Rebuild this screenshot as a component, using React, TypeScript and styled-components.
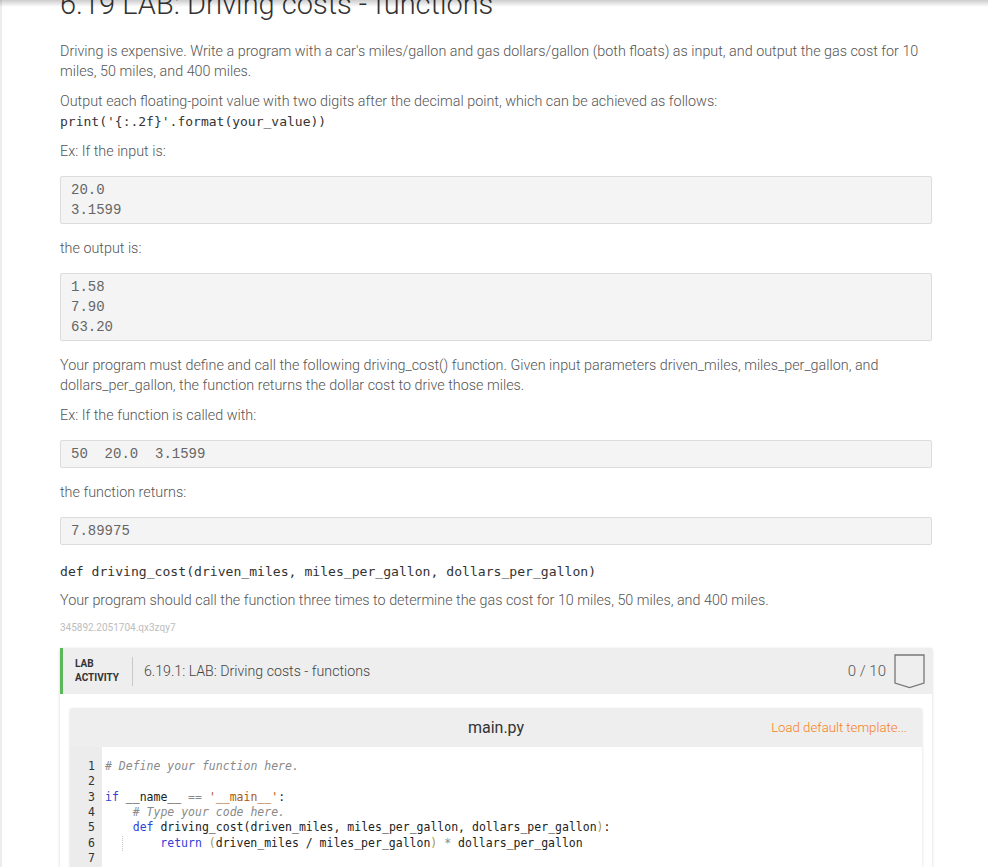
import React from 'react';
import styled, { createGlobalStyle } from 'styled-components';

const Global = createGlobalStyle`
  html, body { margin: 0; padding: 0; background: #fff; }
  body { font-family: Roboto, "Liberation Sans", sans-serif; }
`;

const Viewport = styled.div`
  position: relative;
  height: 867px;
  overflow: hidden;
  background: #fff;
`;

const TopShade = styled.div`
  position: absolute;
  top: 0;
  left: 0;
  right: 0;
  height: 7px;
  background: linear-gradient(to bottom, rgba(0, 0, 0, 0.2), rgba(0, 0, 0, 0));
  pointer-events: none;
  z-index: 5;
`;

const Page = styled.main`
  border-left: 2px solid #ededed;
  padding: 0 56px 0 58px;
`;

const Title = styled.h1`
  margin: -16px 0 18px;
  font: 300 29px/40px Roboto, "Liberation Sans", sans-serif;
  color: #333;
  white-space: nowrap;
`;

const P = styled.p`
  margin: 0 0 10px;
  font: 300 14.35px/20px Roboto, "Liberation Sans", sans-serif;
  color: #555;
`;

const InlineCode = styled.code`
  display: block;
  font: 13px/20px "DejaVu Sans Mono", monospace;
  color: #333;
`;

const Sample = styled.pre`
  margin: 14px 0 15px;
  padding: 3px 10px;
  background: #f4f4f4;
  border: 1px solid #dcdcdc;
  border-radius: 2px;
  font: 14px/20px "Liberation Mono", monospace;
  color: #666;
  white-space: pre;
`;

const Signature = styled.pre`
  margin: 17px 0 9px;
  font: 13.1px/20px "DejaVu Sans Mono", monospace;
  color: #333;
`;

const SmallId = styled.div`
  margin: 8px 0 13px;
  font: 10px/14px Roboto, "Liberation Sans", sans-serif;
  color: #bdbdbd;
`;

const Lab = styled.section`
  background: #fff;
  box-shadow: 0 1px 3px rgba(0, 0, 0, 0.18);
`;

const LabHeader = styled.header`
  display: flex;
  align-items: center;
  height: 46px;
  background: #eee;
  border-left: 3px solid #5cb65c;
  padding: 0 7px 0 12px;
`;

const LabTag = styled.div`
  font: 700 10px/14px Roboto, "Liberation Sans", sans-serif;
  color: #333;
  text-transform: uppercase;
`;

const Divider = styled.div`
  width: 1px;
  height: 29px;
  background: #c8c8c8;
  margin: 0 11px 0 13px;
`;

const LabTitle = styled.div`
  flex: 1;
  font: 300 14.2px/20px Roboto, "Liberation Sans", sans-serif;
  color: #444;
`;

const Score = styled.div`
  font: 300 15px/20px Roboto, "Liberation Sans", sans-serif;
  color: #555;
  margin-right: 8px;
`;

const LabBody = styled.div`
  padding: 14px 10px 0 10px;
`;

const Editor = styled.div`
  background: #fff;
  border-radius: 2px;
  box-shadow: 0 1px 3px rgba(0, 0, 0, 0.15);
`;

const EditorHeader = styled.div`
  display: grid;
  grid-template-columns: 1fr auto 1fr;
  align-items: center;
  height: 39px;
  background: #eee;
  border-radius: 2px 2px 0 0;
`;

const FileName = styled.div`
  grid-column: 2;
  font: 400 16px/20px Roboto, "Liberation Sans", sans-serif;
  color: #333;
`;

const TemplateLink = styled.a`
  justify-self: end;
  padding-right: 15px;
  font: 300 13.2px/20px Roboto, "Liberation Sans", sans-serif;
  color: #f8801a;
  text-decoration: none;
  cursor: pointer;
`;

const CodeArea = styled.div`
  display: flex;
  font: 11.5px/15.34px "DejaVu Sans Mono", monospace;
  color: #222;
`;

const Gutter = styled.div`
  width: 32px;
  box-sizing: border-box;
  background: #ececec;
  padding: 12px 7px 20px 0;
  text-align: right;
  color: #333;
`;

const Lines = styled.div`
  flex: 1;
  padding: 12px 0 20px 3px;
  white-space: pre;
`;

const Line = styled.div`
  height: 15.34px;
`;

const Cm = styled.span`
  color: #8a8a8a;
  font-style: italic;
`;

const Kw = styled.span`
  color: #2f3fd6;
`;

const Str = styled.span`
  color: #a85a12;
`;

const Op = styled.span`
  color: #8a8a8a;
`;

const Br = styled.span`
  color: #a59a3a;
`;

const IndentLead = styled.span`
  display: inline-block;
  width: 17px;
`;

const IndentGuide = styled.span`
  display: inline-block;
  width: 38.3px;
  height: 15.34px;
  vertical-align: top;
  border-left: 1px dotted #c8c8c8;
  box-sizing: border-box;
`;

const Badge = () => (
  <svg width="31" height="35" viewBox="0 0 31 35" aria-hidden="true">
    <path d="M1 1 H30 V29 L15.5 33.5 L1 29 Z" fill="none" stroke="#777" strokeWidth="1.3" strokeLinejoin="miter" />
  </svg>
);

export default function App() {
  return (
    <Viewport>
      <Global />
      <TopShade />
      <Page>
        <Title>6.19 LAB: Driving costs - functions</Title>
        <P>
          Driving is expensive. Write a program with a car's miles/gallon and gas dollars/gallon (both floats) as input, and
          output the gas cost for 10 miles, 50 miles, and 400 miles.
        </P>
        <P>
          Output each floating-point value with two digits after the decimal point, which can be achieved as follows:
          <InlineCode>print('{'{'}:.2f{'}'}'.format(your_value))</InlineCode>
        </P>
        <P>Ex: If the input is:</P>
        <Sample>{'20.0\n3.1599'}</Sample>
        <P>the output is:</P>
        <Sample>{'1.58\n7.90\n63.20'}</Sample>
        <P>
          Your program must define and call the following driving_cost() function. Given input parameters driven_miles,
          miles_per_gallon, and dollars_per_gallon, the function returns the dollar cost to drive those miles.
        </P>
        <P>Ex: If the function is called with:</P>
        <Sample>{'50  20.0  3.1599'}</Sample>
        <P>the function returns:</P>
        <Sample>{'7.89975'}</Sample>
        <Signature>def driving_cost(driven_miles, miles_per_gallon, dollars_per_gallon)</Signature>
        <P>Your program should call the function three times to determine the gas cost for 10 miles, 50 miles, and 400 miles.</P>
        <SmallId>345892.2051704.qx3zqy7</SmallId>

        <Lab>
          <LabHeader>
            <LabTag>
              Lab
              <br />
              Activity
            </LabTag>
            <Divider />
            <LabTitle>6.19.1: LAB: Driving costs - functions</LabTitle>
            <Score>0 / 10</Score>
            <Badge />
          </LabHeader>
          <LabBody>
            <Editor>
              <EditorHeader>
                <FileName>main.py</FileName>
                <TemplateLink>Load default template...</TemplateLink>
              </EditorHeader>
              <CodeArea>
                <Gutter>
                  {[1, 2, 3, 4, 5, 6, 7].map((n) => (
                    <Line key={n}>{n}</Line>
                  ))}
                </Gutter>
                <Lines>
                  <Line>
                    <Cm># Define your function here.</Cm>
                  </Line>
                  <Line> </Line>
                  <Line>
                    <Kw>if</Kw> __name__ <Op>==</Op> <Str>'__main__'</Str>:
                  </Line>
                  <Line>
                    {'    '}
                    <Cm># Type your code here.</Cm>
                  </Line>
                  <Line>
                    {'    '}
                    <Kw>def</Kw> driving_cost(driven_miles, miles_per_gallon, dollars_per_gallon<Br>)</Br>:
                  </Line>
                  <Line>
                    <IndentLead />
                    <IndentGuide />
                    <Kw>return</Kw> <Br>(</Br>driven_miles / miles_per_gallon<Br>)</Br> <Op>*</Op> dollars_per_gallon
                  </Line>
                  <Line> </Line>
                </Lines>
              </CodeArea>
            </Editor>
          </LabBody>
        </Lab>
      </Page>
    </Viewport>
  );
}
